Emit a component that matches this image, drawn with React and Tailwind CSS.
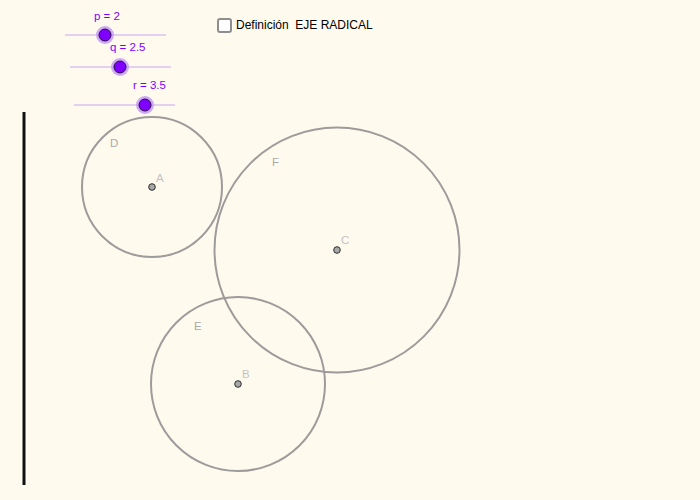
import React from 'react';

const circles = [
  { cx: 152, cy: 187, r: 70 },
  { cx: 337, cy: 250, r: 122.5 },
  { cx: 238, cy: 384, r: 87 },
];

const points = [
  { x: 152, y: 187, label: 'A', lx: 156, ly: 182 },
  { x: 337, y: 250, label: 'C', lx: 341, ly: 244 },
  { x: 238, y: 384, label: 'B', lx: 242, ly: 378 },
];

const circleLabels = [
  { t: 'D', x: 110, y: 147 },
  { t: 'F', x: 272, y: 166 },
  { t: 'E', x: 194, y: 330 },
];

const sliders = [
  { x1: 65, x2: 166, y: 35, k: 105, label: 'p = 2', lx: 94, ly: 20 },
  { x1: 70, x2: 171, y: 67, k: 120, label: 'q = 2.5', lx: 110, ly: 51 },
  { x1: 74, x2: 175, y: 105, k: 145, label: 'r = 3.5', lx: 133, ly: 89 },
];

export default function App() {
  return (
    <div className="relative w-[700px] h-[500px] bg-[#fffaee] overflow-hidden" style={{ fontFamily: '"Liberation Sans", Arial, sans-serif' }}>
      <svg width="700" height="500" className="absolute inset-0">
        <line x1="24" y1="112" x2="24" y2="485" stroke="#111" strokeWidth="3" />

        {circles.map((c, i) => (
          <circle key={i} cx={c.cx} cy={c.cy} r={c.r} fill="none" stroke="#9e9b9b" strokeWidth="2" />
        ))}

        {circleLabels.map((l) => (
          <text key={l.t} x={l.x} y={l.y} fontSize="11.5" fill="#aaaaaa">{l.t}</text>
        ))}

        {points.map((p) => (
          <g key={p.label}>
            <circle cx={p.x} cy={p.y} r="3.3" fill="#a8a8a8" stroke="#2e2e2e" strokeWidth="1" />
            <text x={p.lx} y={p.ly} fontSize="11.5" fill="#c4c4c4">{p.label}</text>
          </g>
        ))}

        {sliders.map((s) => (
          <g key={s.label}>
            <line x1={s.x1} y1={s.y} x2={s.x2} y2={s.y} stroke="#c8a6f0" strokeWidth="1" />
            <circle cx={s.k} cy={s.y} r="9" fill="#c49af7" opacity="0.85" />
            <circle cx={s.k} cy={s.y} r="6" fill="#7f00ff" stroke="#2a1040" strokeWidth="1" />
            <text x={s.lx} y={s.ly} fontSize="11.5" fill="#7f00ff">{s.label}</text>
          </g>
        ))}
      </svg>

      <div className="absolute left-[217px] top-[16px] flex items-center gap-[4px]">
        <div className="w-[15px] h-[15px] rounded-[3px] border-2 border-[#8e8e8e] bg-white" />
        <span className="text-[12px] text-black whitespace-pre">Definición  EJE RADICAL</span>
      </div>
    </div>
  );
}
